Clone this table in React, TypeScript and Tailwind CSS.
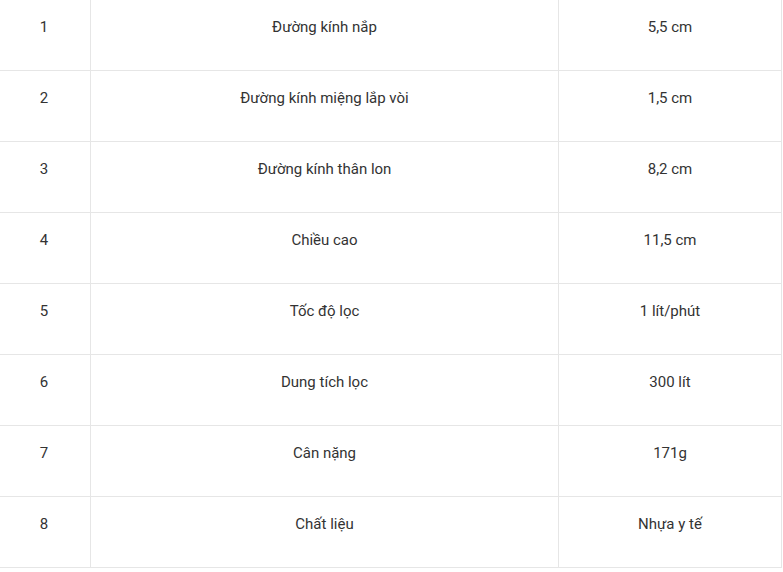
const rows = [
  ['1', 'Đường kính nắp', '5,5 cm'],
  ['2', 'Đường kính miệng lắp vòi', '1,5 cm'],
  ['3', 'Đường kính thân lon', '8,2 cm'],
  ['4', 'Chiều cao', '11,5 cm'],
  ['5', 'Tốc độ lọc', '1 lít/phút'],
  ['6', 'Dung tích lọc', '300 lít'],
  ['7', 'Cân nặng', '171g'],
  ['8', 'Chất liệu', 'Nhựa y tế'],
];

export default function App() {
  return (
    <div className="w-[783px] h-[572px] bg-white font-['Roboto',sans-serif] text-[15px] text-[#333]">
      <div className="grid grid-cols-[91px_468px_223px]">
        {rows.map((r) => (
          <div key={r[0]} className="contents">
            <div className="h-[71px] border-r border-b border-[#e6e6e6] pt-[17px] pr-[2px] text-center leading-5">{r[0]}</div>
            <div className="h-[71px] border-r border-b border-[#e6e6e6] pt-[17px] text-center leading-5">{r[1]}</div>
            <div className="h-[71px] border-r border-b border-[#e6e6e6] pt-[17px] text-center leading-5">{r[2]}</div>
          </div>
        ))}
      </div>
    </div>
  );
}
